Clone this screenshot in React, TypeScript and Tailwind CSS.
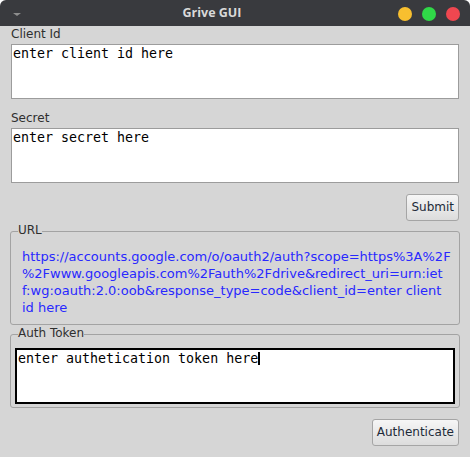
import type { ReactElement } from "react";

const urlLines = [
  "https://accounts.google.com/o/oauth2/auth?scope=https%3A%2F",
  "%2Fwww.googleapis.com%2Fauth%2Fdrive&redirect_uri=urn:iet",
  "f:wg:oauth:2.0:oob&response_type=code&client_id=enter client",
  "id here",
];

function TextBox({ value }: { value: string }): ReactElement {
  return (
    <div className="h-[55px] w-full border border-[#9c9c9c] bg-white p-px font-['DejaVu_Sans_Mono',monospace] text-[13.3px] leading-[15.5px] whitespace-pre text-black">
      {value}
    </div>
  );
}

function Button({ label }: { label: string }): ReactElement {
  return (
    <button
      type="button"
      className="h-[27px] rounded-[3px] border border-[#a5a5a5] bg-linear-to-b from-[#f6f6f6] to-[#dcdcdc] px-[4px] text-[12px] leading-[15px] text-[#1d2a38]"
    >
      {label}
    </button>
  );
}

export default function App(): ReactElement {
  return (
    <div className="h-[457px] w-[470px] bg-white font-['DejaVu_Sans',sans-serif]">
      {/* title bar */}
      <div className="flex h-[26px] items-center rounded-t-[6px] bg-[#393a3e]">
        <div className="flex w-[26px] justify-end pr-[5px] pt-[2px]">
          <div className="h-0 w-0 border-x-[4px] border-t-[3px] border-x-transparent border-t-[#8e8e8e]" />
        </div>
        <div className="flex-1 text-center font-['Open_Sans',sans-serif] text-[12.5px] font-bold text-[#d9d9d9]">
          Grive GUI
        </div>
        <div className="flex items-center gap-[10px] pr-[10px] pt-[2px]">
          <span className="h-[14px] w-[14px] rounded-full bg-[#f8bf2f]" />
          <span className="h-[14px] w-[14px] rounded-full bg-[#30d848]" />
          <span className="h-[14px] w-[14px] rounded-full bg-[#ef4750]" />
        </div>
      </div>

      <div className="h-[431px] bg-[#d6d6d6] px-[11px] pt-px text-[#2f2f2f]">
        <div className="mb-[2px] h-[15px] text-[12px] leading-[15px]">Client Id</div>
        <TextBox value="enter client id here" />

        <div className="mt-[12px] mb-[2px] h-[15px] text-[12px] leading-[15px]">Secret</div>
        <TextBox value="enter secret here" />

        <div className="mt-[11px] flex justify-end">
          <Button label="Submit" />
        </div>

        <fieldset className="-mx-px mt-[2px] rounded-[3px] border border-[#a3a3a3] pb-[8px]">
          <legend className="ml-[7px] pb-[2px] text-[12px] leading-[15px]">URL</legend>
          <div className="pt-[8px] pl-[11px] text-[13px] leading-[17px] whitespace-pre text-[#2828ff]">
            {urlLines.map((line) => (
              <div key={line}>{line}</div>
            ))}
          </div>
        </fieldset>

        <fieldset className="-mx-px mt-px rounded-[3px] border border-[#a3a3a3] pb-[3px]">
          <legend className="ml-[7px] pb-[2px] text-[12px] leading-[15px]">Auth Token</legend>
          <div className="mx-[4px] mt-[5px] h-[56px] border-2 border-black bg-white px-px font-['DejaVu_Sans_Mono',monospace] text-[13.3px] leading-[15.5px] whitespace-pre text-black">
            <span>enter authetication token here</span>
            <span className="inline-block h-[13px] w-[2px] translate-y-[2px] bg-black align-baseline" />
          </div>
        </fieldset>

        <div className="mt-[11px] flex justify-end">
          <Button label="Authenticate" />
        </div>
      </div>
    </div>
  );
}
